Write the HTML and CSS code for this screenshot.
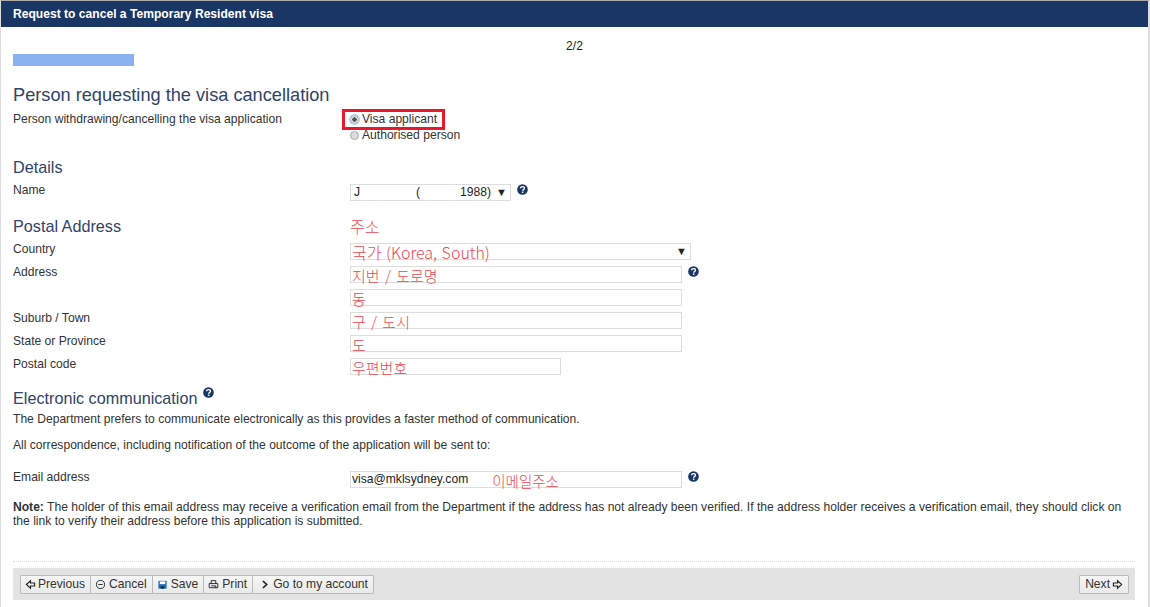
FILE: index.html
```html
<!DOCTYPE html>
<html lang="en">
<head>
<meta charset="utf-8">
<title>Request to cancel a Temporary Resident visa</title>
<link rel="stylesheet" href="styles.css">
</head>
<body>
<svg class="defs" width="0" height="0" aria-hidden="true">
  <symbol id="help" viewBox="0 0 12 12">
    <circle cx="6" cy="6" r="5.8" fill="#1a3665"/>
    <path d="M3.9 4.7C3.9 3.4 4.9 2.8 6 2.8s2.1.7 2.1 1.8c0 1.6-1.9 1.5-1.9 2.8" fill="none" stroke="#fff" stroke-width="1.5"/>
    <rect x="5.3" y="8.2" width="1.7" height="1.5" fill="#fff"/>
  </symbol>
</svg>
<div class="page">
  <header class="titlebar">Request to cancel a Temporary Resident visa</header>
  <main class="content">
    <div class="step">2/2</div>
    <div class="progress"></div>

    <h2 class="h-large">Person requesting the visa cancellation</h2>
    <div class="row row-radio">
      <div class="label">Person withdrawing/cancelling the visa application</div>
      <div class="radios">
        <label class="radio radio-hl"><span class="dot dot-on"></span>Visa applicant</label>
        <label class="radio"><span class="dot"></span>Authorised person</label>
      </div>
    </div>

    <h3 class="h-mid h-details">Details</h3>
    <div class="row">
      <div class="label">Name</div>
      <div class="select select-name"><span class="name-a">J</span><span class="name-b">(</span><span class="name-c">1988)</span><span class="caret">▼</span></div>
      <svg class="help help-name"><use href="#help"/></svg>
    </div>

    <div class="row row-heading">
      <h3 class="h-mid">Postal Address</h3>
      <div class="note-ko note-address">주소</div>
    </div>
    <div class="row">
      <div class="label">Country</div>
      <div class="select select-country"><span class="ko ko-big">국가 (Korea, South)</span><span class="caret">▼</span></div>
    </div>
    <div class="row">
      <div class="label">Address</div>
      <div class="input input-wide"><span class="ko">지번 / 도로명</span></div>
      <svg class="help"><use href="#help"/></svg>
    </div>
    <div class="row">
      <div class="label"></div>
      <div class="input input-wide"><span class="ko">동</span></div>
    </div>
    <div class="row">
      <div class="label">Suburb / Town</div>
      <div class="input input-wide"><span class="ko">구 / 도시</span></div>
    </div>
    <div class="row">
      <div class="label">State or Province</div>
      <div class="input input-wide"><span class="ko">도</span></div>
    </div>
    <div class="row">
      <div class="label">Postal code</div>
      <div class="input input-short"><span class="ko">우편번호</span></div>
    </div>

    <h3 class="h-mid h-electronic">Electronic communication<svg class="help help-title"><use href="#help"/></svg></h3>
    <p class="para para-first">The Department prefers to communicate electronically as this provides a faster method of communication.</p>
    <p class="para para-second">All correspondence, including notification of the outcome of the application will be sent to:</p>
    <div class="row row-email">
      <div class="label">Email address</div>
      <div class="input input-wide"><span class="email">visa@mklsydney.com</span><span class="ko ko-email">이메일주소</span></div>
      <svg class="help"><use href="#help"/></svg>
    </div>
    <p class="para para-note"><b>Note:</b> The holder of this email address may receive a verification email from the Department if the address has not already been verified. If the address holder receives a verification email, they should click on the link to verify their address before this application is submitted.</p>

    <div class="divider"></div>
    <footer class="actions">
      <div class="btn-group">
        <button class="btn btn-prev" type="button"><svg class="ico" viewBox="0 0 12 12"><path d="M1.5 6 6 2v2.3h4.5v3.4H6V10z" fill="none" stroke="#222" stroke-width="1.2"/></svg>Previous</button>
        <button class="btn" type="button"><svg class="ico" viewBox="0 0 12 12"><circle cx="6" cy="6" r="4.4" fill="none" stroke="#222"/><path d="M3.5 6h5" stroke="#222"/></svg>Cancel</button>
        <button class="btn" type="button"><svg class="ico" viewBox="0 0 12 12"><path d="M1.5 2h9v8.5h-9z" fill="#1f6fb5"/><path d="M3 2.6h6v3H3z" fill="#fff"/><path d="M4 8h4v2.5H4z" fill="#123"/></svg>Save</button>
        <button class="btn" type="button"><svg class="ico" viewBox="0 0 12 12"><path d="M3.5 5V1.8h5V5M1.3 5h9.4v4.5H1.3zM3.5 7.5h5v2.5" fill="none" stroke="#222"/></svg>Print</button>
        <button class="btn" type="button"><svg class="ico ico-go" viewBox="0 0 12 12"><path d="M3.5 1.8 8 6l-4.5 4.2" fill="none" stroke="#222" stroke-width="2"/></svg>Go to my account</button>
      </div>
      <button class="btn btn-next" type="button">Next<svg class="ico ico-next" viewBox="0 0 12 12"><path d="M10.5 6 6 2v2.3H1.5v3.4H6V10z" fill="none" stroke="#222" stroke-width="1.2"/></svg></button>
    </footer>
  </main>
</div>
</body>
</html>
```

FILE: styles.css
```css
* { box-sizing: border-box; }
html, body { margin: 0; height: 100%; overflow: hidden; background: #fff; }
body { font-family: "Liberation Sans", Arial, sans-serif; font-size: 12.1px; color: #333; }
.defs { position: absolute; }
.page {
  width: 1150px; height: 607px;
  border-top: 1px solid #aaa;
  border-left: 1px solid #ddd;
  border-right: 2px solid #ddd;
}
.titlebar {
  height: 26px; padding: 0 12px;
  background: #1a3665; color: #fff;
  font-size: 12.1px; font-weight: bold; line-height: 26px;
}
.content { padding: 0 12px; }
.step { height: 27px; padding-top: 12px; text-align: center; line-height: 14px; color: #222; }
.progress { width: 121px; height: 12px; background: #8ab1f0; }
h2, h3 { margin: 0; font-weight: normal; color: #2f4468; }
.h-large { font-size: 18.2px; line-height: 21px; margin-top: 19px; }
.h-mid { font-size: 16.2px; line-height: 19px; }
.row { display: flex; align-items: flex-start; min-height: 17px; margin-bottom: 6px; }
.label { width: 337px; flex: none; line-height: 14px; height: 14px; margin-top: -1px; }
.row-radio { margin-top: 7px; margin-bottom: 0; }
.radios { display: flex; flex-direction: column; margin-top: -1px; }
.radio { display: flex; align-items: center; height: 17px; line-height: 17px; white-space: nowrap; color: #333; }
.radio-hl { outline: 3px solid #e8192c; width: 97px; position: relative; left: -5px; padding-left: 5px; height: 15px; }
.dot { width: 9px; height: 9px; border-radius: 50%; background: #ddd; border: 1px solid #aaa; margin-right: 3px; flex: none; }
.dot-on { background: radial-gradient(circle, #555 0 2px, #e6e6e6 2.4px); outline: 1px solid #a8cdf0; }
.h-details { margin-top: 14px; margin-bottom: 7px; }
.select, .input {
  height: 17px; flex: none; border: 1px solid #ddd; background: #fff;
  padding-left: 1px; line-height: 15px; color: #222;
  white-space: nowrap; position: relative;
  display: flex; align-items: center;
}
.select-name { width: 161px; }
.name-a { width: 64px; padding-left: 2px; }
.name-b { width: 44px; }
.name-c { width: 34px; }
.caret { font-size: 11px; color: #222; position: absolute; right: 3px; top: 0; line-height: 14px; }
.select-country { width: 341px; }
.input-wide { width: 332px; }
.input-short { width: 211px; }
.help { width: 11px; height: 11px; flex: none; margin-left: 6px; margin-top: 0; }
.help-title { margin-left: 6px; vertical-align: 6px; }
.row-heading { margin-top: 16px; margin-bottom: 7px; align-items: center; }
.row-heading .h-mid { width: 337px; flex: none; }
.note-ko { font-family: "Noto Sans CJK KR", sans-serif; font-weight: 300; color: #ee4555; font-size: 16px; line-height: 19px; }
.ko { font-family: "Noto Sans CJK KR", sans-serif; font-weight: 300; color: #ee4555; font-size: 15px; line-height: 15px; word-spacing: 2px; position: relative; top: 1px; }
.ko-big { font-size: 16px; word-spacing: 1px; }
.email { margin-right: 24px; }
.ko-email { font-size: 14.5px; top: 1px; }
.h-electronic { margin-top: 12px; }
.para { margin: 0; line-height: 14px; color: #333; }
.para-first { margin-top: 4px; }
.para-second { margin-top: 12px; }
.row-email { margin-top: 19px; margin-bottom: 0; }
.para-note { margin-top: 12px; }
.divider { margin-top: 33px; border-top: 1px dotted #ddd; width: 1122px; }
.actions {
  margin-top: 6px; width: 1122px; height: 32px; background: #e3e3e3;
  display: flex; align-items: center; justify-content: space-between;
  padding: 0 6px 0 7px;
}
.btn-group { display: flex; }
.btn {
  height: 19px; padding: 0 5px 0 4px; margin: 0 -1px 0 0;
  display: flex; align-items: center; gap: 3px;
  font: 12.1px "Liberation Sans", Arial, sans-serif; color: #333;
  background: linear-gradient(#f6f6f6, #e9e9e9);
  border: 1px solid #bbb; border-radius: 1px; white-space: nowrap;
}
.btn-prev { gap: 2px; }
.ico { width: 11px; height: 11px; flex: none; }
.ico-go { margin-left: 3px; margin-right: 0; width: 10px; }
.btn-next { margin: 0; padding: 0 5px; gap: 2px; }
```
